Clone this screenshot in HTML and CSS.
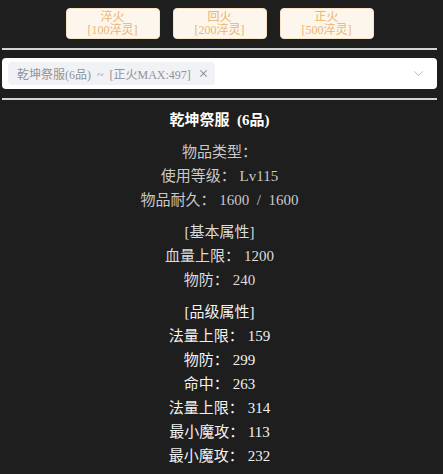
FILE: index.html
```html
<!DOCTYPE html>
<html lang="zh-CN">
<head>
<meta charset="utf-8">
<link rel="stylesheet" href="styles.css">
</head>
<body>
<div class="wrap">
  <div class="btns">
    <button class="btn"><span>淬火</span><span>[100淬灵]</span></button>
    <button class="btn"><span>回火</span><span>[200淬灵]</span></button>
    <button class="btn"><span>正火</span><span>[500淬灵]</span></button>
  </div>
  <div class="rule"></div>
  <div class="select">
    <span class="tag">
      <span class="tag-text">乾坤祭服(6品) ~ [正火MAX:497]</span>
      <svg class="tag-x" viewBox="0 0 10 10" width="9" height="9"><path d="M1.5 1.5 L8.5 8.5 M8.5 1.5 L1.5 8.5" stroke="#909399" stroke-width="1.2" fill="none"/></svg>
    </span>
    <svg class="chev" viewBox="0 0 12 8" width="11" height="7"><path d="M1 1.5 L6 6.2 L11 1.5" stroke="#b8bbc2" stroke-width="1.1" fill="none"/></svg>
  </div>
  <div class="rule"></div>
  <div class="info">
    <div class="title">乾坤祭服 (6品)</div>
    <div class="block c-info">
      <div>物品类型：</div>
      <div>使用等级： <span class="v">Lv115</span></div>
      <div>物品耐久： <span class="v">1600 / 1600</span></div>
    </div>
    <div class="block c-base">
      <div>[基本属性]</div>
      <div>血量上限： <span class="v">1200</span></div>
      <div>物防： <span class="v">240</span></div>
    </div>
    <div class="block c-qual">
      <div>[品级属性]</div>
      <div>法量上限： <span class="v">159</span></div>
      <div>物防： <span class="v">299</span></div>
      <div>命中： <span class="v">263</span></div>
      <div>法量上限： <span class="v">314</span></div>
      <div>最小魔攻： <span class="v">113</span></div>
      <div>最小魔攻： <span class="v">232</span></div>
    </div>
  </div>
</div>
</body>
</html>
```
FILE: styles.css
```css
html, body {
  margin: 0;
  padding: 0;
  background: #1e1e1e;
}
body {
  font-family: "Liberation Serif", "Noto Sans CJK SC", serif;
}
.wrap {
  padding: 8px 6px 0 2px;
}
.btns {
  display: flex;
  justify-content: center;
  gap: 13px;
}
.btn {
  box-sizing: border-box;
  width: 94px;
  height: 31px;
  display: flex;
  flex-direction: column;
  align-items: center;
  justify-content: center;
  padding: 0;
  background: #fdf6ec;
  border: 1px solid #f8e3c5;
  border-radius: 4px;
  color: #ebb46c;
  font-family: "Liberation Serif", "Noto Sans CJK SC", serif;
  font-size: 12px;
  line-height: 13px;
}
.rule {
  height: 2px;
  margin-top: 9px;
  background: #d4d4d4;
}
.select {
  box-sizing: border-box;
  height: 31px;
  margin-top: 8px;
  background: #ffffff;
  border-radius: 4px;
  display: flex;
  align-items: center;
  justify-content: space-between;
  padding: 0 13px 0 6px;
}
.tag {
  display: flex;
  align-items: center;
  gap: 8px;
  height: 23px;
  padding: 0 7px 0 9px;
  background: #f0f2f5;
  border-radius: 4px;
  color: #909399;
  font-size: 12px;
  word-spacing: 3px;
}
.tag-x {
  display: block;
}
.chev {
  display: block;
}
.info {
  text-align: center;
  font-size: 15px;
  line-height: 24px;
  margin-top: 8px;
}
.v {
  word-spacing: 3.75px;
}
.title {
  color: #ffffff;
  font-weight: bold;
  word-spacing: 3.75px;
}
.block {
  margin-top: 8px;
}
.c-info {
  color: #c9c9c9;
}
.c-base {
  color: #dcdcdc;
}
.c-qual {
  color: #f2f2f2;
}
```
